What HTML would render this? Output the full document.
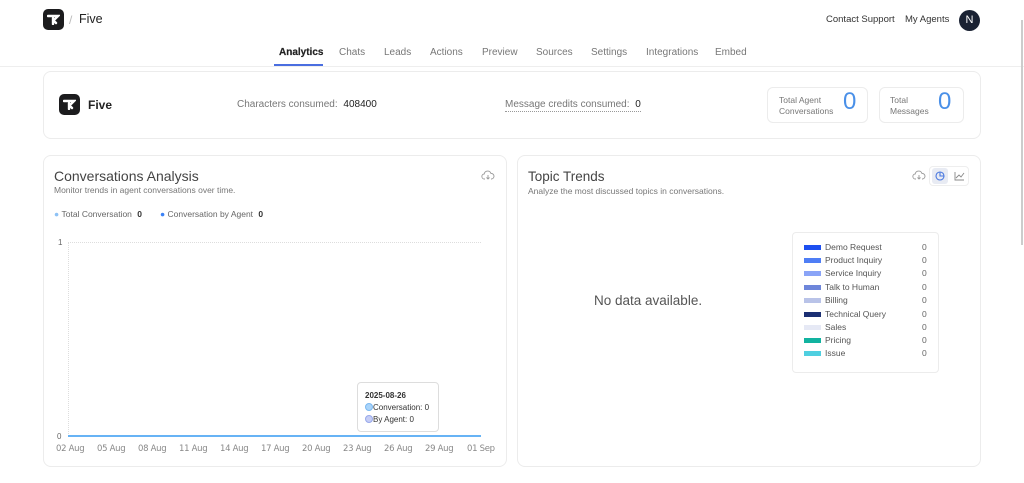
<!DOCTYPE html>
<html><head><meta charset="utf-8"><style>
*{box-sizing:border-box;margin:0;padding:0}
body{width:1024px;height:483px;background:#fff;font-family:"Liberation Sans",sans-serif;color:#222;position:relative;overflow:hidden}
.abs{position:absolute}
.logo{background:#1c1c1e;border-radius:5px;display:flex;align-items:center;justify-content:center}
.card{position:absolute;border:1px solid #ececec;border-radius:8px;background:#fff}
.tab{position:absolute;top:47px;font-size:10px;color:#777}
.ax{position:absolute;top:444px;font-size:8.5px;color:#888;font-family:"DejaVu Sans",sans-serif;letter-spacing:-0.3px}
.lg{position:absolute;left:804px;font-size:8.5px;color:#555;display:flex;align-items:center}
.lg i{display:inline-block;width:17px;height:5px;margin-right:4px}
.lg b{position:absolute;left:118px;font-weight:normal;color:#666}
</style></head><body>
<div class="abs logo" style="left:43px;top:9px;width:21px;height:21px"><svg width="13" height="11" viewBox="0 0 13 11"><path d="M1 2h10l-3 3M6 4v6M6 6l3 3" stroke="#fff" stroke-width="2.4" fill="none" stroke-linecap="round"/></svg></div>
<div class="abs" style="left:69px;top:13px;font-size:12px;color:#bbb">/</div>
<div class="abs" style="left:79px;top:12px;font-size:12.5px;color:#222">Five</div>
<div class="abs" style="left:826px;top:14px;font-size:9.5px;color:#333">Contact Support</div>
<div class="abs" style="left:905px;top:14px;font-size:9.5px;color:#333">My Agents</div>
<div class="abs" style="left:959px;top:10px;width:21px;height:21px;border-radius:50%;background:#1a2233;color:#fff;font-size:11px;text-align:center;line-height:21px">N</div>
<div class="tab" style="left:279px;color:#222;font-weight:600;-webkit-text-stroke:0.2px #222">Analytics</div>
<div class="abs" style="left:274px;top:64px;width:49px;height:2px;background:#4a6ee0"></div>
<div class="tab" style="left:339px">Chats</div>
<div class="tab" style="left:384px">Leads</div>
<div class="tab" style="left:430px">Actions</div>
<div class="tab" style="left:482px">Preview</div>
<div class="tab" style="left:536px">Sources</div>
<div class="tab" style="left:591px">Settings</div>
<div class="tab" style="left:646px">Integrations</div>
<div class="tab" style="left:715px">Embed</div>
<div class="abs" style="left:0;top:66px;width:1024px;height:1px;background:#eee"></div>
<div class="abs" style="left:1021px;top:20px;width:2px;height:225px;background:#ccc"></div>

<div class="card" style="left:43px;top:71px;width:938px;height:68px"></div>
<div class="abs logo" style="left:59px;top:94px;width:21px;height:21px"><svg width="13" height="11" viewBox="0 0 13 11"><path d="M1 2h10l-3 3M6 4v6M6 6l3 3" stroke="#fff" stroke-width="2.4" fill="none" stroke-linecap="round"/></svg></div>
<div class="abs" style="left:88px;top:98px;font-size:12px;font-weight:bold;color:#222">Five</div>
<div class="abs" style="left:237px;top:99px;font-size:10px;color:#777">Characters consumed: <span style="color:#222;margin-left:3px">408400</span></div>
<div class="abs" style="left:505px;top:99px;font-size:10px;color:#777;border-bottom:1px dotted #999;padding-bottom:1px">Message credits consumed: <span style="color:#222;margin-left:3px">0</span></div>
<div class="card" style="left:767px;top:87px;width:101px;height:36px;border-radius:6px"></div>
<div class="abs" style="left:779px;top:95px;font-size:8.5px;color:#777;line-height:11px">Total Agent<br>Conversations</div>
<div class="abs" style="left:843px;top:88px;font-size:24px;color:#4a90e8">0</div>
<div class="card" style="left:879px;top:87px;width:85px;height:36px;border-radius:6px"></div>
<div class="abs" style="left:890px;top:95px;font-size:8.5px;color:#777;line-height:11px">Total<br>Messages</div>
<div class="abs" style="left:938px;top:88px;font-size:24px;color:#4a90e8">0</div>

<div class="card" style="left:43px;top:155px;width:464px;height:312px"></div>
<div class="abs" style="left:54px;top:168px;font-size:14px;color:#444">Conversations Analysis</div>
<div class="abs" style="left:54px;top:185px;font-size:8.5px;color:#777">Monitor trends in agent conversations over time.</div>
<svg class="abs" style="left:481px;top:170px" width="14" height="11" viewBox="0 0 14 11"><path d="M4 9H3.5a2.5 2.5 0 0 1-.3-5A3.5 3.5 0 0 1 10 3.5a2.5 2.5 0 0 1 .5 5.5H10M7 5v4M5.5 7.5 7 9l1.5-1.5" stroke="#999" fill="none" stroke-width="0.9"/></svg>
<div class="abs" style="left:54px;top:209px;font-size:8.5px;color:#666"><span style="color:#8ec2f5">●</span>&nbsp;Total Conversation <b style="color:#333;margin-left:3px">0</b></div>
<div class="abs" style="left:160px;top:209px;font-size:8.5px;color:#666"><span style="color:#3b82f6">●</span>&nbsp;Conversation by Agent <b style="color:#333;margin-left:3px">0</b></div>
<div class="abs" style="left:58px;top:238px;font-size:8px;color:#666">1</div>
<div class="abs" style="left:57px;top:432px;font-size:8px;color:#666">0</div>
<div class="abs" style="left:68px;top:242px;width:413px;border-top:1px dotted #ddd"></div>
<div class="abs" style="left:68px;top:242px;height:194px;border-left:1px dotted #ddd"></div>
<div class="abs" style="left:68px;top:435px;width:413px;height:2px;background:#67b3f5"></div>
<div class="ax" style="left:56px">02 Aug</div><div class="ax" style="left:97px">05 Aug</div><div class="ax" style="left:138px">08 Aug</div><div class="ax" style="left:179px">11 Aug</div><div class="ax" style="left:220px">14 Aug</div><div class="ax" style="left:261px">17 Aug</div><div class="ax" style="left:302px">20 Aug</div><div class="ax" style="left:343px">23 Aug</div><div class="ax" style="left:384px">26 Aug</div><div class="ax" style="left:425px">29 Aug</div><div class="ax" style="left:467px">01 Sep</div>
<div class="abs" style="left:357px;top:382px;width:82px;height:50px;border:1px solid #ddd;border-radius:4px;background:#fff;font-size:8px;color:#333;padding:7px 0 0 7px;line-height:12px">
<b>2025-08-26</b><br><span style="display:inline-block;width:8px;height:8px;border-radius:50%;background:#a9d4fa;border:1px solid #7bb8f0;vertical-align:-1px"></span>Conversation: 0<br><span style="display:inline-block;width:8px;height:8px;border-radius:50%;background:#c5cdf5;border:1px solid #98a8ea;vertical-align:-1px"></span>By Agent: 0</div>

<div class="card" style="left:517px;top:155px;width:464px;height:312px"></div>
<div class="abs" style="left:528px;top:169px;font-size:13.5px;color:#444">Topic Trends</div>
<div class="abs" style="left:528px;top:186px;font-size:8.5px;color:#777">Analyze the most discussed topics in conversations.</div>
<svg class="abs" style="left:912px;top:170px" width="14" height="11" viewBox="0 0 14 11"><path d="M4 9H3.5a2.5 2.5 0 0 1-.3-5A3.5 3.5 0 0 1 10 3.5a2.5 2.5 0 0 1 .5 5.5H10M7 5v4M5.5 7.5 7 9l1.5-1.5" stroke="#999" fill="none" stroke-width="0.9"/></svg>
<div class="abs" style="left:929px;top:166px;width:40px;height:20px;border:1px solid #eee;border-radius:4px"></div>
<div class="abs" style="left:932px;top:168px;width:16px;height:16px;background:#e8ebf3;border-radius:3px"></div>
<svg class="abs" style="left:935px;top:171px" width="10" height="10" viewBox="0 0 10 10"><circle cx="5" cy="5" r="4" stroke="#4a78e0" fill="none" stroke-width="1.1"/><path d="M5 1v4h4" stroke="#4a78e0" fill="none" stroke-width="1.1"/></svg>
<svg class="abs" style="left:954px;top:171px" width="11" height="10" viewBox="0 0 11 10"><path d="M1 1v8h9M2 7l3-3 2 2 3-4" stroke="#888" fill="none" stroke-width="0.9"/></svg>
<div class="abs" style="left:594px;top:293px;font-size:13.5px;color:#555">No data available.</div>
<div class="card" style="left:792px;top:232px;width:147px;height:141px;border-radius:4px"></div>
<div class="lg" style="top:242px"><i style="background:#1d4ff0"></i>Demo Request<b>0</b></div>
<div class="lg" style="top:255px"><i style="background:#4f7ef5"></i>Product Inquiry<b>0</b></div>
<div class="lg" style="top:268px"><i style="background:#8aa4f7"></i>Service Inquiry<b>0</b></div>
<div class="lg" style="top:282px"><i style="background:#6e86da"></i>Talk to Human<b>0</b></div>
<div class="lg" style="top:295px"><i style="background:#b9c3e8"></i>Billing<b>0</b></div>
<div class="lg" style="top:309px"><i style="background:#1b2f73"></i>Technical Query<b>0</b></div>
<div class="lg" style="top:322px"><i style="background:#e6e9f5"></i>Sales<b>0</b></div>
<div class="lg" style="top:335px"><i style="background:#12b3a0"></i>Pricing<b>0</b></div>
<div class="lg" style="top:348px"><i style="background:#4fcfe0"></i>Issue<b>0</b></div>
</body></html>
